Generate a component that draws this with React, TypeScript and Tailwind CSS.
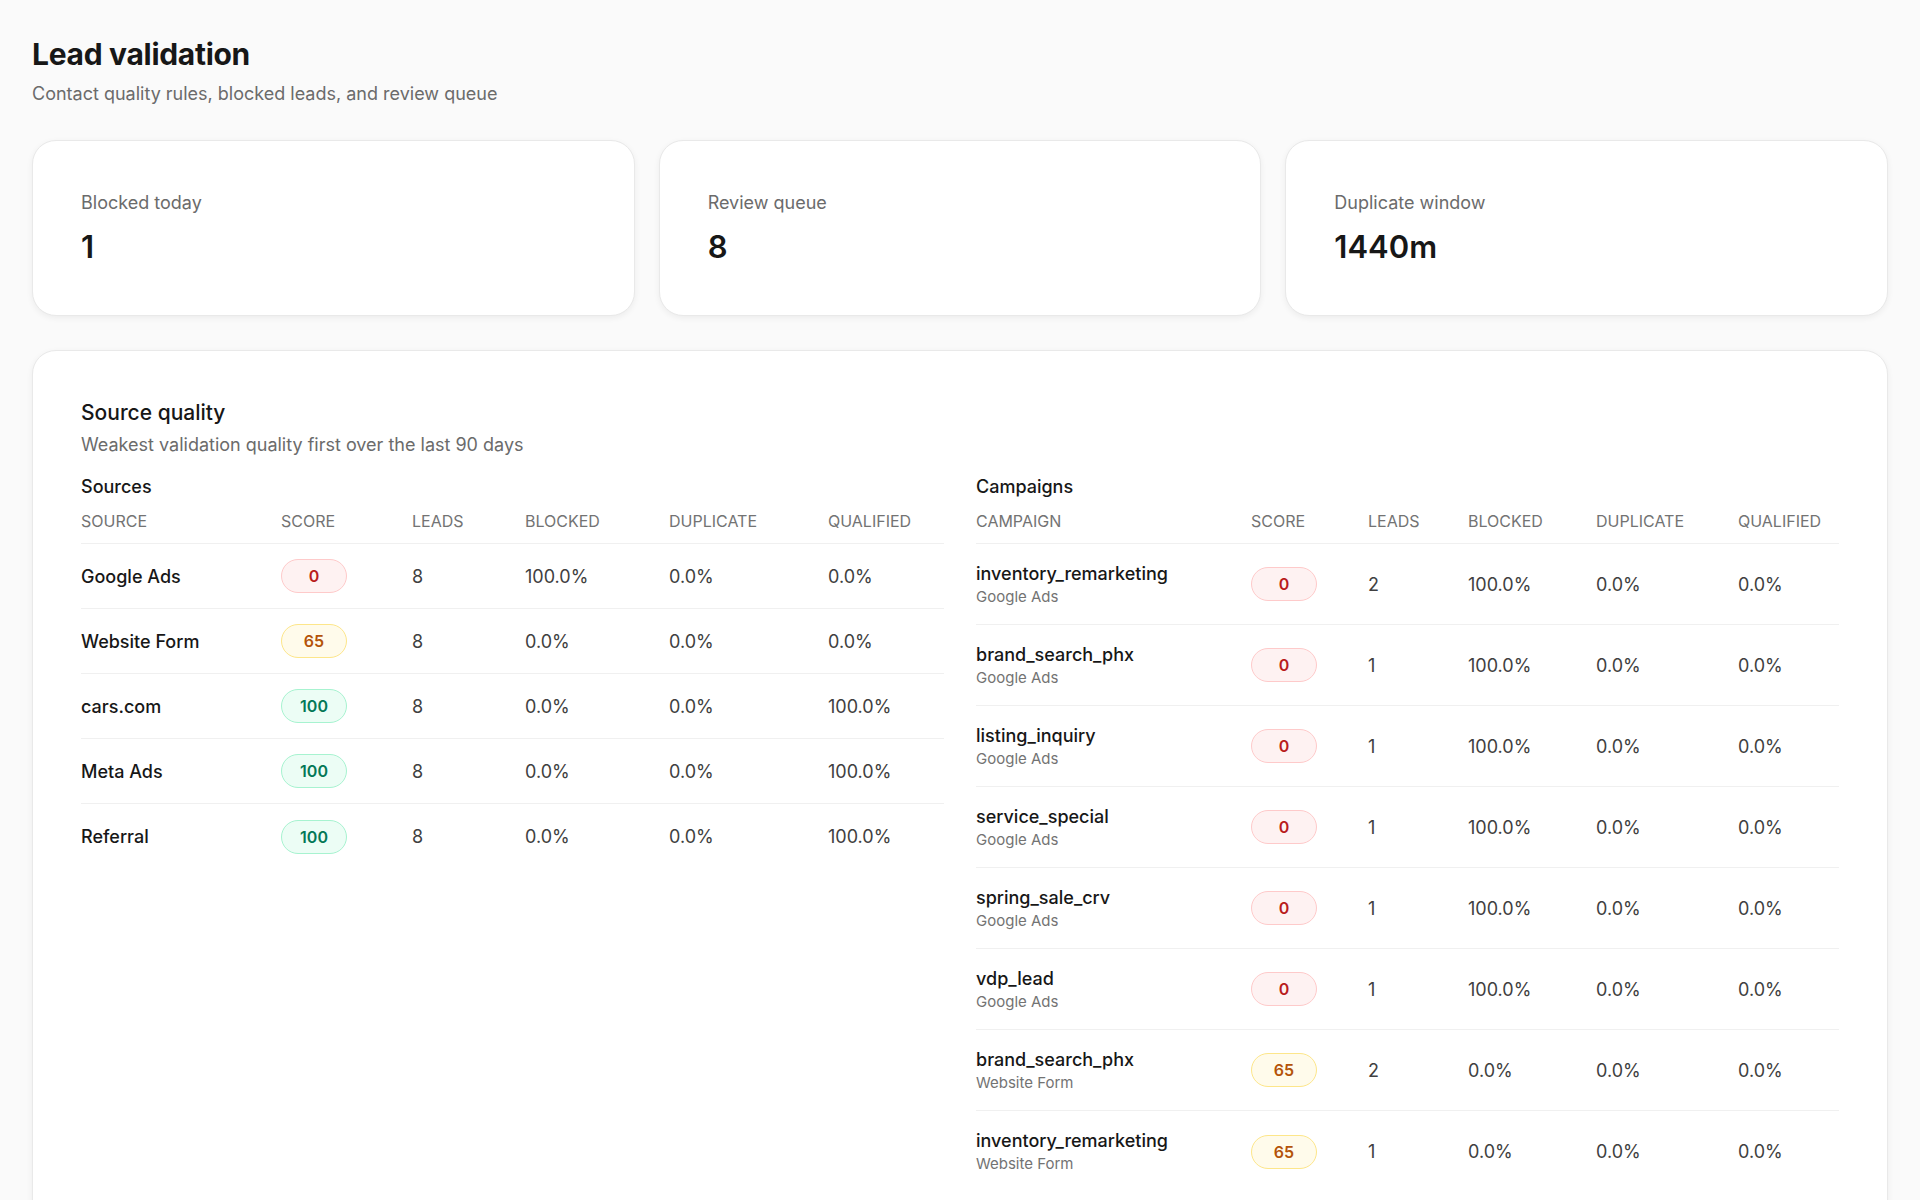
import React from 'react';
import clsx from 'clsx';

type SourceRow = {
  name: string;
  score: number;
  leads: number;
  blocked: string;
  duplicate: string;
  qualified: string;
};

type CampaignRow = SourceRow & { source: string };

const stats = [
  { label: 'Blocked today', value: '1' },
  { label: 'Review queue', value: '8' },
  { label: 'Duplicate window', value: '1440m' },
];

const sources: SourceRow[] = [
  { name: 'Google Ads', score: 0, leads: 8, blocked: '100.0%', duplicate: '0.0%', qualified: '0.0%' },
  { name: 'Website Form', score: 65, leads: 8, blocked: '0.0%', duplicate: '0.0%', qualified: '0.0%' },
  { name: 'cars.com', score: 100, leads: 8, blocked: '0.0%', duplicate: '0.0%', qualified: '100.0%' },
  { name: 'Meta Ads', score: 100, leads: 8, blocked: '0.0%', duplicate: '0.0%', qualified: '100.0%' },
  { name: 'Referral', score: 100, leads: 8, blocked: '0.0%', duplicate: '0.0%', qualified: '100.0%' },
];

const campaigns: CampaignRow[] = [
  { name: 'inventory_remarketing', source: 'Google Ads', score: 0, leads: 2, blocked: '100.0%', duplicate: '0.0%', qualified: '0.0%' },
  { name: 'brand_search_phx', source: 'Google Ads', score: 0, leads: 1, blocked: '100.0%', duplicate: '0.0%', qualified: '0.0%' },
  { name: 'listing_inquiry', source: 'Google Ads', score: 0, leads: 1, blocked: '100.0%', duplicate: '0.0%', qualified: '0.0%' },
  { name: 'service_special', source: 'Google Ads', score: 0, leads: 1, blocked: '100.0%', duplicate: '0.0%', qualified: '0.0%' },
  { name: 'spring_sale_crv', source: 'Google Ads', score: 0, leads: 1, blocked: '100.0%', duplicate: '0.0%', qualified: '0.0%' },
  { name: 'vdp_lead', source: 'Google Ads', score: 0, leads: 1, blocked: '100.0%', duplicate: '0.0%', qualified: '0.0%' },
  { name: 'brand_search_phx', source: 'Website Form', score: 65, leads: 2, blocked: '0.0%', duplicate: '0.0%', qualified: '0.0%' },
  { name: 'inventory_remarketing', source: 'Website Form', score: 65, leads: 1, blocked: '0.0%', duplicate: '0.0%', qualified: '0.0%' },
];

// column tracks for the two tables
const sourceCols = 'grid grid-cols-[200px_131px_113px_144px_159px_1fr]';
const campaignCols = 'grid grid-cols-[275px_117px_100px_128px_142px_1fr]';

const ScoreBadge: React.FC<{ score: number }> = ({ score }) => (
  <span
    className={clsx(
      'flex h-[34px] w-[66px] items-center justify-center rounded-full border text-[16px] font-semibold',
      score < 50 && 'border-[#fecaca] bg-[#fef2f2] text-[#b91c1c]',
      score >= 50 && score < 90 && 'border-[#fde68a] bg-[#fffbeb] text-[#b45309]',
      score >= 90 && 'border-[#a7f3d0] bg-[#ecfdf5] text-[#047857]'
    )}
  >
    {score}
  </span>
);

const HeaderRow: React.FC<{ cols: string; first: string }> = ({ cols, first }) => (
  <div className={clsx(cols, 'border-b border-[#f0f0f0] pt-2 pb-2.5 text-[16px] leading-6 uppercase text-[#737373]')}>
    <span>{first}</span>
    <span>Score</span>
    <span>Leads</span>
    <span>Blocked</span>
    <span>Duplicate</span>
    <span>Qualified</span>
  </div>
);

const SourcesTable: React.FC = () => (
  <div>
    <h3 className="text-[18px] leading-7 font-medium">Sources</h3>
    <HeaderRow cols={sourceCols} first="Source" />
    <div className="divide-y divide-[#f0f0f0]">
      {sources.map((row) => (
        <div key={row.name} className={clsx(sourceCols, 'h-[65px] items-center text-[18px] text-[#404040]')}>
          <span className="font-medium text-[#171717]">{row.name}</span>
          <span>
            <ScoreBadge score={row.score} />
          </span>
          <span>{row.leads}</span>
          <span>{row.blocked}</span>
          <span>{row.duplicate}</span>
          <span>{row.qualified}</span>
        </div>
      ))}
    </div>
  </div>
);

const CampaignsTable: React.FC = () => (
  <div>
    <h3 className="text-[18px] leading-7 font-medium">Campaigns</h3>
    <HeaderRow cols={campaignCols} first="Campaign" />
    <div className="divide-y divide-[#f0f0f0]">
      {campaigns.map((row, i) => (
        <div key={i} className={clsx(campaignCols, 'h-[81px] items-center text-[18px] text-[#404040]')}>
          <div className="flex flex-col">
            <span className="leading-6 font-medium text-[#171717]">{row.name}</span>
            <span className="mt-px text-[15px] leading-5 text-[#737373]">{row.source}</span>
          </div>
          <span>
            <ScoreBadge score={row.score} />
          </span>
          <span>{row.leads}</span>
          <span>{row.blocked}</span>
          <span>{row.duplicate}</span>
          <span>{row.qualified}</span>
        </div>
      ))}
    </div>
  </div>
);

export default function App() {
  return (
    <div className="min-h-screen bg-[#fafafa] px-8 pt-[34px] pb-8 font-['Inter',sans-serif] text-[#171717]">
      <h1 className="text-[30px] leading-10 font-bold tracking-[-0.01em]">Lead validation</h1>
      <p className="mt-1.5 text-[18px] leading-7 text-[#6b6b6b]">
        Contact quality rules, blocked leads, and review queue
      </p>

      <div className="mt-8 grid grid-cols-3 gap-6">
        {stats.map((s) => (
          <div
            key={s.label}
            className="rounded-3xl border border-[#e9e9e9] bg-white px-12 pt-12 pb-12 shadow-[0_2px_6px_rgba(0,0,0,0.06)]"
          >
            <div className="text-[18px] leading-7 text-[#6b6b6b]">{s.label}</div>
            <div className="mt-2.5 text-[31px] leading-10 font-semibold">{s.value}</div>
          </div>
        ))}
      </div>

      <section className="mt-[34px] rounded-3xl border border-[#e9e9e9] bg-white p-12 shadow-[0_2px_6px_rgba(0,0,0,0.06)]">
        <h2 className="text-[21px] leading-7 font-medium">Source quality</h2>
        <p className="mt-1 text-[18px] leading-7 text-[#6b6b6b]">
          Weakest validation quality first over the last 90 days
        </p>
        <div className="mt-3.5 grid grid-cols-2 gap-8">
          <SourcesTable />
          <CampaignsTable />
        </div>
      </section>
    </div>
  );
}
